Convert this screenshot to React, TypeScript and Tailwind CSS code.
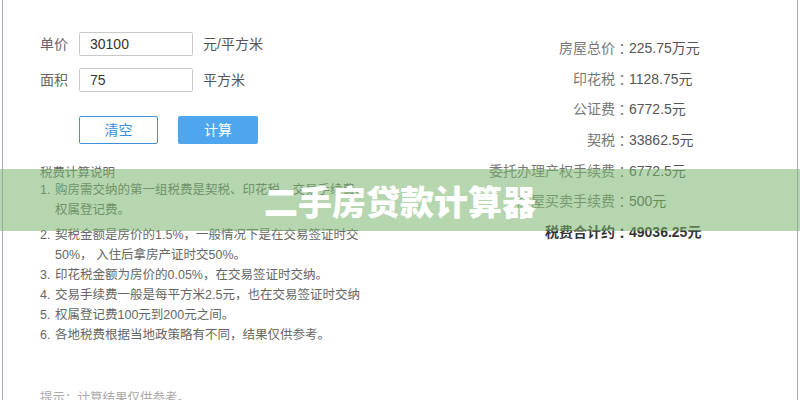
import React from 'react';

const font = { fontFamily: '"Liberation Sans", "Noto Sans CJK SC", sans-serif' };

interface ResultRow {
  label: string;
  value: string;
  strong?: boolean;
}

const results: ResultRow[] = [
  { label: '房屋总价', value: '225.75万元' },
  { label: '印花税', value: '1128.75元' },
  { label: '公证费', value: '6772.5元' },
  { label: '契税', value: '33862.5元' },
  { label: '委托办理产权手续费', value: '6772.5元' },
  { label: '房屋买卖手续费', value: '500元' },
  { label: '税费合计约', value: '49036.25元', strong: true },
];

const notes: string[][] = [
  ['购房需交纳的第一组税费是契税、印花税、交易手续费、', '权属登记费。'],
  ['契税金额是房价的1.5%，一般情况下是在交易签证时交', '50%， 入住后拿房产证时交50%。'],
  ['印花税金额为房价的0.05%，在交易签证时交纳。'],
  ['交易手续费一般是每平方米2.5元，也在交易签证时交纳'],
  ['权属登记费100元到200元之间。'],
  ['各地税费根据当地政策略有不同，结果仅供参考。'],
];

const Field: React.FC<{ label: string; value: string; unit: string }> = ({ label, value, unit }) => (
  <div className="flex items-center h-6">
    <span className="w-[39px] text-[#666]">{label}</span>
    <div className="w-[114px] h-6 border border-[#c9c9c9] rounded-[2px] pl-[10px] flex items-center text-[#333]">
      {value}
    </div>
    <span className="ml-[10px] text-[#555]">{unit}</span>
  </div>
);

const App: React.FC = () => {
  return (
    <div className="relative w-[800px] h-[400px] overflow-hidden bg-white text-[14px]" style={font}>
      <div className="mx-[2px] h-full border-x border-[#b2a5cc] flex">
        {/* left: form + notes */}
        <div className="w-[486px] pl-[37px] pt-[32px]">
          <div className="flex flex-col gap-3">
            <Field label="单价" value="30100" unit="元/平方米" />
            <Field label="面积" value="75" unit="平方米" />
          </div>

          <div className="flex gap-5 ml-[39px] mt-6">
            <button className="w-[79px] h-7 border border-[#3f91d8] rounded-[2px] text-[#3a8ee0] bg-white">
              清空
            </button>
            <button className="w-[80px] h-7 rounded-[2px] text-white bg-[#4ea7ee]">计算</button>
          </div>

          <div className="mt-[19px] text-[#666] text-[12.5px] leading-[20px]">
            <div>税费计算说明</div>
            <div className="mt-[-3px]">
              {notes.map((lines, i) => (
                <div key={i} className={i === 1 ? 'mt-[5px]' : ''}>
                  {lines.map((line, j) => (
                    <div key={j} className="flex">
                      <span className="w-[15px] shrink-0">{j === 0 ? `${i + 1}.` : ''}</span>
                      <span className="whitespace-nowrap">{line}</span>
                    </div>
                  ))}
                </div>
              ))}
            </div>
            <div className="mt-[43px] text-[#aaa]">提示：计算结果仅供参考。</div>
          </div>
        </div>

        {/* right: results */}
        <div className="pt-[33px]">
          <div className="grid grid-cols-[auto_auto]">
            {results.map((r) => (
              <React.Fragment key={r.label}>
                <div
                  className={
                    r.strong
                      ? 'h-[30.7px] flex items-center justify-end font-bold text-[#333]'
                      : 'h-[30.7px] flex items-center justify-end text-[#777]'
                  }
                >
                  <span>{r.label}</span>
                  <span className="w-[14px] text-center" style={{ fontFamily: '"Noto Sans CJK TC", sans-serif' }}>
                    ：
                  </span>
                </div>
                <div className={r.strong ? 'h-[30.7px] flex items-center font-bold text-[#333]' : 'h-[30.7px] flex items-center text-[#555]'}>
                  {r.value}
                </div>
              </React.Fragment>
            ))}
          </div>
        </div>
      </div>

      {/* title banner over the page */}
      <div className="absolute left-0 right-0 top-[169px] h-[62px] bg-[rgba(120,180,110,0.55)] flex items-center justify-center">
        <span
          className="text-white text-[34px] font-black"
          style={{ fontFamily: '"Noto Sans CJK SC", sans-serif' }}
        >
          二手房贷款计算器
        </span>
      </div>
    </div>
  );
};

export default App;
